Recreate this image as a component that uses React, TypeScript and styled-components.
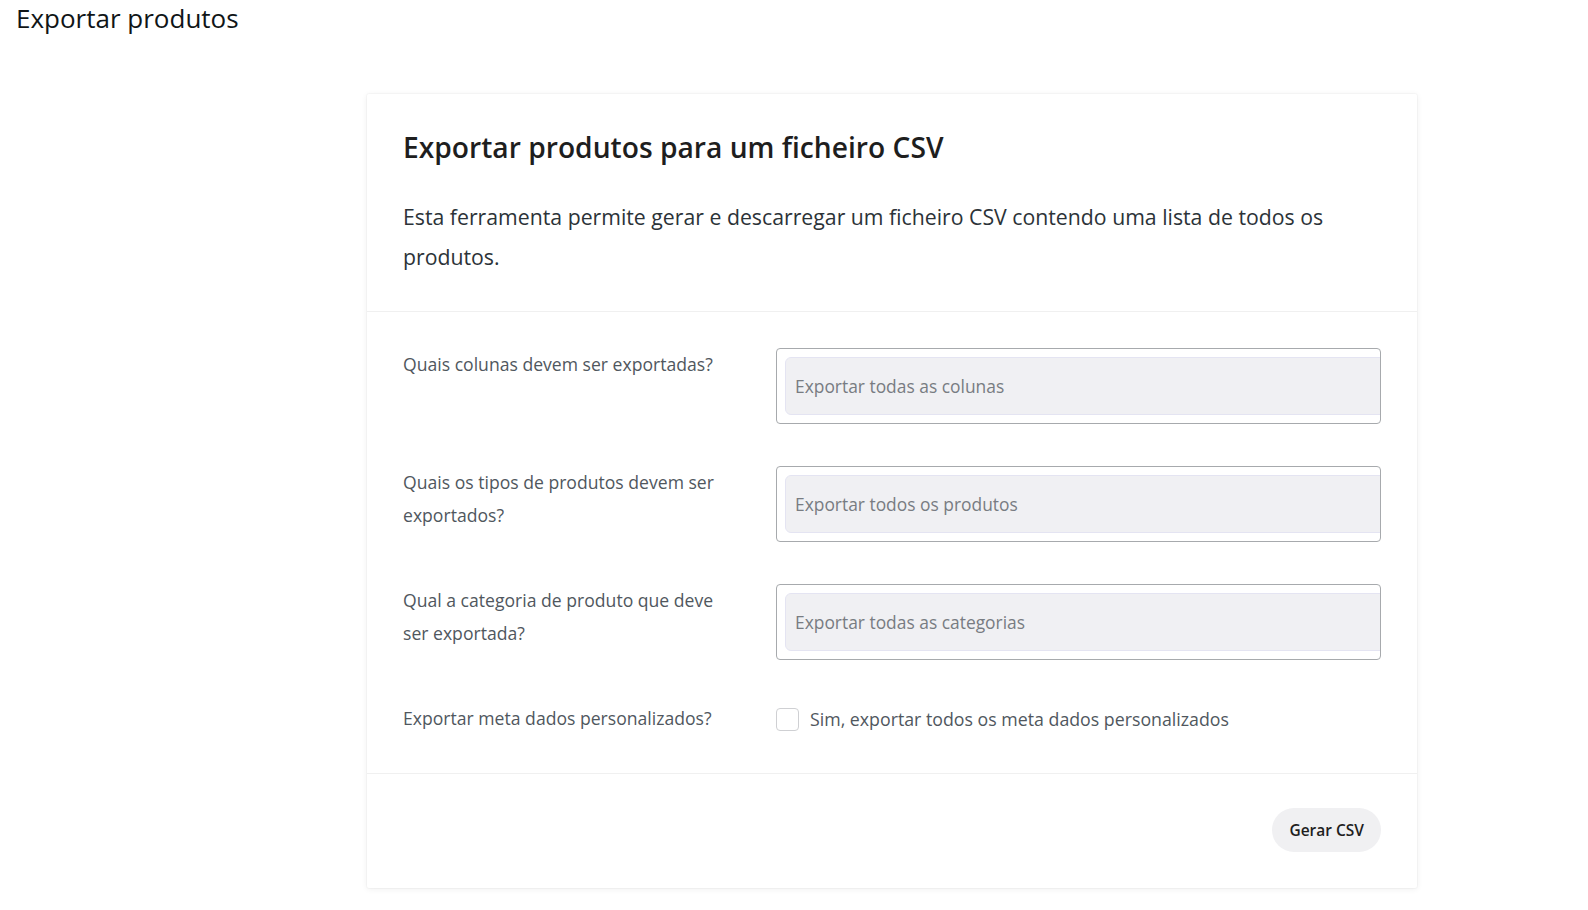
import React, { useState } from 'react';
import styled, { createGlobalStyle } from 'styled-components';

const GlobalStyle = createGlobalStyle`
  html, body {
    margin: 0;
    padding: 0;
    background: #ffffff;
  }
  body {
    font-family: "Open Sans", "Noto Sans", sans-serif;
    color: #1e1e1e;
  }
  * {
    box-sizing: border-box;
  }
`;

const Page = styled.div`
  padding: 0 16px 24px;
`;

const PageTitle = styled.h1`
  margin: 0;
  font-size: 26px;
  line-height: 36px;
  font-weight: 400;
  color: #101517;
`;

const Card = styled.section`
  width: 1050px;
  margin: 58px 0 0 351px;
  background: #ffffff;
  border-radius: 2px;
  box-shadow: 0 0 0 1px rgba(0, 0, 0, 0.025), 0 1px 6px rgba(0, 0, 0, 0.07);
`;

const CardHeader = styled.header`
  padding: 34px 36px 35px;
  border-bottom: 1px solid #f0f0f0;
`;

const Heading = styled.h2`
  margin: 0;
  font-size: 28.2px;
  line-height: 38px;
  font-weight: 600;
  color: #1e1e1e;
`;

const Description = styled.p`
  margin: 31px 0 0;
  font-size: 21.25px;
  line-height: 39.5px;
  color: #2c3338;
`;

const CardBody = styled.div`
  display: grid;
  grid-template-columns: 330px 1fr;
  column-gap: 43px;
  row-gap: 42px;
  padding: 36px 36px 38px;
  border-bottom: 1px solid #f0f0f0;
`;

const Label = styled.label`
  font-size: 17.6px;
  line-height: 33px;
  color: #50575e;
`;

const SelectBox = styled.div`
  height: 76px;
  border: 1px solid #a7aaad;
  border-radius: 4px;
  padding: 8px 0 8px 8px;
  overflow: hidden;
`;

const SelectInner = styled.div`
  height: 100%;
  width: calc(100% + 8px);
  background: #f0f0f3;
  border: 1px solid #e4e4f2;
  border-radius: 6px;
  display: flex;
  align-items: center;
  padding: 0 9px;
  font-size: 17.4px;
  color: #787c82;
`;

const CheckRow = styled.label`
  display: flex;
  align-items: center;
  gap: 11px;
  height: 33px;
  font-size: 17.75px;
  color: #50575e;
  cursor: pointer;
`;

const Box = styled.span<{ $checked: boolean }>`
  width: 23px;
  height: 23px;
  border: 1px solid #cfd0d3;
  border-radius: 4px;
  background: ${(p) => (p.$checked ? '#3858e9' : '#ffffff')};
  flex-shrink: 0;
  margin-top: 2px;
`;

const CardFooter = styled.footer`
  display: flex;
  justify-content: flex-end;
  padding: 34px 36px 36px;
`;

const Button = styled.button`
  height: 44px;
  padding: 0 17px;
  border: none;
  border-radius: 22px;
  background: #f0f0f2;
  font-family: inherit;
  font-size: 15.5px;
  font-weight: 600;
  color: #1e1e1e;
  cursor: pointer;
`;

const fields = [
  { label: 'Quais colunas devem ser exportadas?', placeholder: 'Exportar todas as colunas' },
  { label: 'Quais os tipos de produtos devem ser exportados?', placeholder: 'Exportar todos os produtos' },
  { label: 'Qual a categoria de produto que deve ser exportada?', placeholder: 'Exportar todas as categorias' },
];

const App: React.FC = () => {
  const [meta, setMeta] = useState(false);

  return (
    <Page>
      <GlobalStyle />
      <PageTitle>Exportar produtos</PageTitle>
      <Card>
        <CardHeader>
          <Heading>Exportar produtos para um ficheiro CSV</Heading>
          <Description>
            Esta ferramenta permite gerar e descarregar um ficheiro CSV contendo uma lista de todos os produtos.
          </Description>
        </CardHeader>
        <CardBody>
          {fields.map((f) => (
            <React.Fragment key={f.label}>
              <Label>{f.label}</Label>
              <SelectBox>
                <SelectInner>{f.placeholder}</SelectInner>
              </SelectBox>
            </React.Fragment>
          ))}
          <Label>Exportar meta dados personalizados?</Label>
          <CheckRow onClick={() => setMeta(!meta)}>
            <Box $checked={meta} />
            Sim, exportar todos os meta dados personalizados
          </CheckRow>
        </CardBody>
        <CardFooter>
          <Button>Gerar CSV</Button>
        </CardFooter>
      </Card>
    </Page>
  );
};

export default App;
